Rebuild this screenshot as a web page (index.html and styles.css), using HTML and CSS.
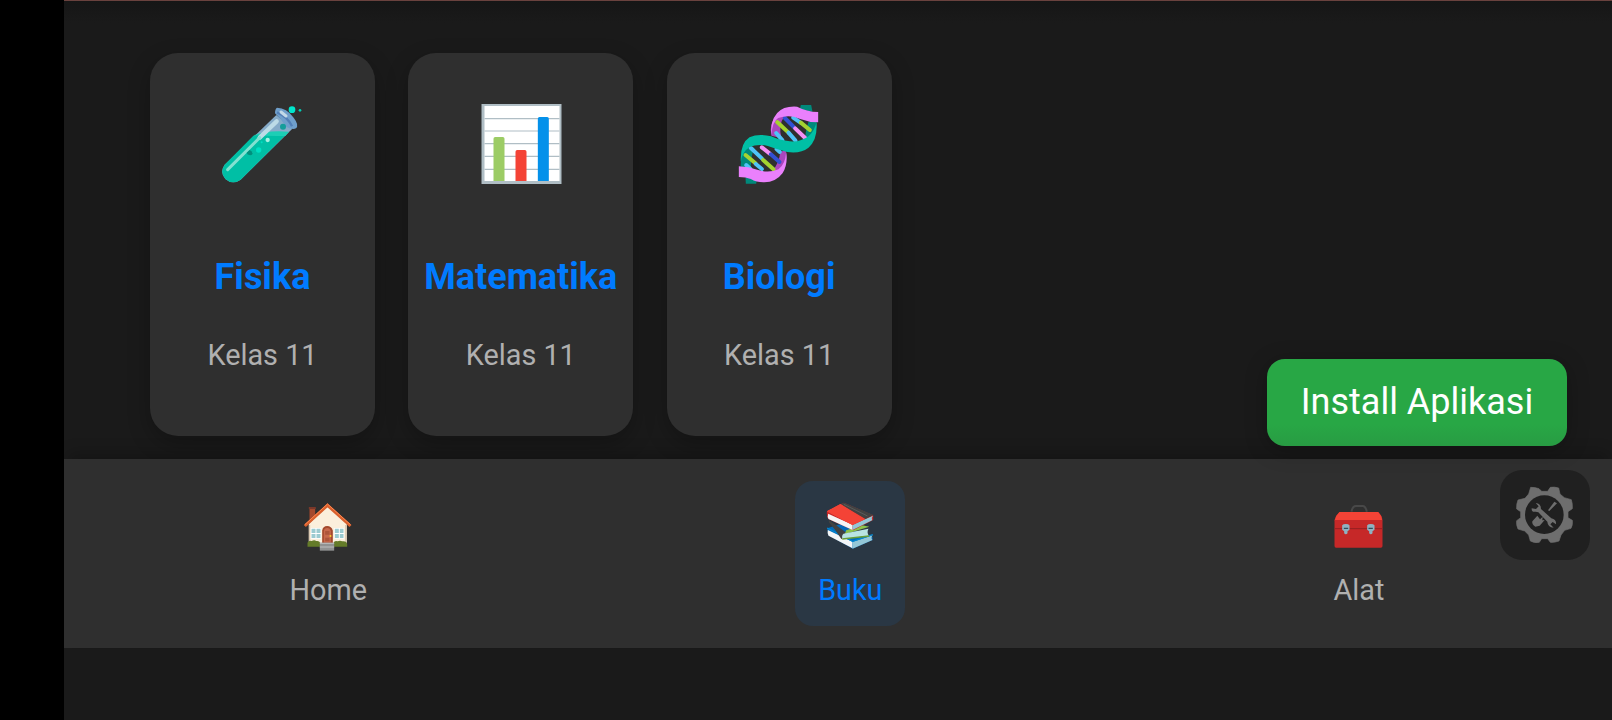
FILE: index.html
```html
<!DOCTYPE html>
<html lang="id">
<head>
<meta charset="utf-8">
<title>Buku</title>
<link rel="stylesheet" href="styles.css">
</head>
<body>
<div class="app">
  <main class="books">
    <article class="card">
      <svg class="card-icon" viewBox="-6 0 330 330">
        <path d="M199 75L247 116L92 269Q68 286 46 267Q28 246 44 224z" fill="#86abc9"/>
        <path d="M130 137Q166 126 229 133L92 269Q68 286 46 267Q28 246 44 224z" fill="#00bfa5"/>
        <path d="M132 136Q174 119 237 125L226 138Q176 139 132 136z" fill="#1cceb5"/>
        <path d="M201 53Q230 53 251 83Q268 105 258 115Q248 120 229 111Q212 85 195 70Q195 56 201 53z" fill="#6f9fcb"/>
        <path d="M201 67Q233 80 246 109" fill="none" stroke="#527fb7" stroke-width="7"/>
        <path d="M213 66L228 78" stroke="#c3d9e8" stroke-width="9" stroke-linecap="round"/>
        <path d="M200 94L149 143" stroke="#bddbe7" stroke-width="13" stroke-linecap="round"/>
        <path d="M149 143L53 239" stroke="#82e1d1" stroke-width="9" stroke-linecap="round"/>
        <circle cx="219" cy="110" r="9" fill="#159d9b"/>
        <circle cx="246" cy="59" r="10" fill="#00e5cb"/>
        <circle cx="270" cy="61" r="4" fill="#00cdb6"/>
        <circle cx="173" cy="150" r="6.500" fill="#a6f1e4"/>
        <circle cx="146" cy="180" r="8" fill="#00dfc3"/>
        <circle cx="155" cy="157" r="3" fill="#00dfc3"/>
        <path d="M110 188a10 10 0 0 0 18 3q-3-9-9-11z" fill="#008f7d"/>
      </svg>
      <h2 class="card-title">Fisika</h2>
      <p class="card-class">Kelas 11</p>
    </article>
    <article class="card">
      <svg class="card-icon" viewBox="1.500 0 330 330">
        <path d="M48 42H288V282H48z" fill="#b0bec5"/>
        <path d="M57 48H282V273H57z" fill="#fff"/>
        <path d="M57 86H282M57 123H282M57 161H282M57 199H282M57 238H282" stroke="#b0bec5" stroke-width="3.500"/>
        <path d="M84 273V146q0-5 5-5h23q5 0 5 5v127z" fill="#9ccc65"/>
        <path d="M150 273V185q0-5 5-5h23q5 0 5 5v88z" fill="#f44336"/>
        <path d="M217 273V86q0-5 5-5h23q5 0 5 5v187z" fill="#0491ea"/>
      </svg>
      <h2 class="card-title">Matematika</h2>
      <p class="card-class">Kelas 11</p>
    </article>
    <article class="card">
      <svg class="card-icon" viewBox="-1.500 0 330 330">
        <path d="M229 45H260L264 65 226 58zM252 95H276Q277 130 258 152L239 162 245 120zM63 262L97 268 95 281H64zM49 230Q47 188 72 166L90 174Q79 195 79 235z" fill="#00897b"/>
        <path d="M141 137Q133 100 154 80L181 77Q160 104 171 145zM167 185L184 181Q191 222 166 252L143 242Q165 220 167 185z" fill="#ab47bc"/>
        <g fill="none" stroke-width="12" stroke-linecap="round">
          <path d="M158 96L192 128" stroke="#a4d330"/><path d="M192 128L213 152" stroke="#4fc3f7"/>
          <path d="M181 84L209 112" stroke="#3251d4"/><path d="M212 115L242 144" stroke="#f48ff5"/>
          <path d="M206 83L228 98" stroke="#4fc3f7"/><path d="M229 98L256 120" stroke="#a4d330"/>
          <path d="M155 129L174 151M156 177L166 186" stroke="#4fc3f7"/>
          <path d="M63 195L93 220" stroke="#a4d330"/><path d="M94 222L112 237" stroke="#4fc3f7"/>
          <path d="M79 174L112 205" stroke="#4fc3f7"/><path d="M116 210L147 238" stroke="#a4d330"/>
          <path d="M112 172L135 190" stroke="#f48ff5"/><path d="M139 193L165 216" stroke="#3251d4"/>
          <path d="M65 225L78 237" stroke="#4fc3f7"/>
        </g>
        <path d="M141 138Q136 94 158 69Q178 47 218 50Q246 65 281 66V97Q253 97 225 86Q195 73 161 84Q142 95 141 138z" fill="#ea80fc"/>
        <path d="M43 229Q72 229 101 240Q133 250 162 238Q183 222 185 186Q191 223 174 250Q153 278 117 277Q95 277 79 267Q64 261 43 261z" fill="#ea80fc"/>
        <path d="M49 215Q46 161 75 142Q102 129 140 139Q164 151 196 154Q228 157 253 138Q270 123 276 97Q280 148 252 173Q228 192 188 186Q150 176 130 168Q99 161 76 171Q54 184 49 215z" fill="#00bfa5"/>
      </svg>
      <h2 class="card-title">Biologi</h2>
      <p class="card-class">Kelas 11</p>
    </article>
  </main>

  <nav class="nav">
    <a class="nav-item">
      <svg class="nav-icon" viewBox="43.500 36 144 144">
        <path d="M60 53H77V85L60 99z" fill="#a4492d"/><path d="M58 51H79V57H58z" fill="#79382a"/>
        <path d="M58 101L114 48 172 102V166H58z" fill="#fbefdc"/>
        <path d="M167 105H172V157H167zM58 105H62V155H58z" fill="#d9c8b2"/>
        <path d="M46 108L114 46 183 108" fill="none" stroke="#d9602d" stroke-width="9"/>
        <path d="M46 104L114 42 183 104" fill="none" stroke="#ff8750" stroke-width="3"/>
        <path d="M64 114H95V146H64zM134 114H164V146H134z" fill="#fff"/>
        <path d="M66 116H78V129H66zM81 116H93V129H81zM66 132H78V144H66zM81 132H93V144H81zM136 116H148V129H136zM151 116H162V129H151zM136 132H148V144H136zM151 132H162V144H151z" fill="#9ccbd0"/>
        <path d="M98 160V122q2-14 15-14t17 14v38z" fill="#a4492d"/>
        <path d="M103 158V124q1-10 10-10t11 10v34z" fill="#c7694d"/>
        <path d="M107 123H120V134H107zM107 143H120V154H107z" fill="#ad553b"/><circle cx="123" cy="138" r="3" fill="#ffd02c"/>
        <path d="M54 170V158q4-8 12-5q9-4 14 0q11-2 13 9v8zM132 170V159q3-8 12-5q8-4 14 0q14-2 15 9v7z" fill="#647b29"/>
        <path d="M91 158H134V182H91z" fill="#919292"/><path d="M91 160H134M91 171H134" stroke="#bdbdbd" stroke-width="3"/>
      </svg>
      <span>Home</span>
    </a>
    <a class="nav-item active">
      <svg class="nav-icon" viewBox="121.500 97 144 144">
        <path d="M125 176L166 163 261 202V211L202 237 129 197z" fill="#0469b7"/>
        <path d="M127 181L201 216V236L129 198Q125 189 127 181z" fill="#f4f6f7"/>
        <path d="M201 217L261 197Q255 207 261 211L201 237z" fill="#94c7d7"/>
        <path d="M125 175L201 215 262 195" fill="none" stroke="#0288d1" stroke-width="4"/>
        <path d="M130 151L180 187 249 168V173L177 195 168 209Q150 180 130 158z" fill="#424242"/>
        <path d="M182 182L231 167 251 171 178 194z" fill="#8bc34a"/>
        <path d="M174 192L249 177Q243 188 250 198L173 208Q166 200 174 192z" fill="#b9e4e2"/>
        <path d="M170 208L251 199" stroke="#689f38" stroke-width="4"/>
        <path d="M124 126L175 99 263 137V151L203 182 128 148Q123 139 124 126z" fill="#c62828"/>
        <path d="M128 132L201 165V181L129 148Q125 142 128 132z" fill="#f5f5f5"/>
        <path d="M201 166L262 138Q256 146 260 152L201 181z" fill="#94c7d7"/>
        <path d="M124 125L165 103 240 148 201 166z" fill="#f44336"/>
        <path d="M165 103L176 99 264 136 240 148z" fill="#424242"/>
        <path d="M124 125L165 103 233 150 201 166z" fill="#f44336"/>
        <path d="M175 104L246 139" stroke="#686868" stroke-width="2"/>
      </svg>
      <span>Buku</span>
    </a>
    <a class="nav-item">
      <svg class="nav-icon" viewBox="46.500 36 144 144">
        <path d="M96 65Q99 48 109 48H130Q138 48 142 65" fill="none" stroke="#484848" stroke-width="6"/>
        <path d="M60 66H176Q188 77 189 91V168Q189 173 184 173H50Q45 173 45 168V91Q49 75 60 66z" fill="#c62828"/>
        <path d="M60 66H176Q186 75 188 90H46Q50 75 60 66z" fill="#f44336"/>
        <path d="M45 116H189" stroke="#951f20" stroke-width="3"/>
        <path d="M68 106q3-4 11-4t11 4v13l-6 5v6q-5 6-10 0v-6l-6-5zM143 106q3-4 11-4t11 4v13l-6 5v6q-5 6-10 0v-6l-6-5z" fill="#8fb1c1"/>
        <path d="M73 115H86M147 115H160" stroke="#2f4e5e" stroke-width="4"/>
      </svg>
      <span>Alat</span>
    </a>
  </nav>

  <button class="install">Install Aplikasi</button>
  <button class="tools" aria-label="Pengaturan">
    <svg class="tools-icon" viewBox="30 30 270 270">
      <path d="M122 82Q135 82 147 86L155 94H173L181 82Q193 80 206 84L210 102 223 113 244 119Q248 131 247 146L234 155V173L247 181Q249 194 243 205L224 211 213 225 207 243Q194 248 181 247L173 236H155L148 247Q133 250 121 243L116 225 104 213 84 207Q78 194 80 182L92 173V155L80 147Q79 132 84 120L105 115 116 102z" fill="#6e6e6e" stroke="#6e6e6e" stroke-width="2" stroke-linejoin="round"/>
      <circle cx="163" cy="164" r="58" fill="#202020"/>
      <path d="M174 151L193 125 201 130 178 153z" fill="#6e6e6e"/>
      <path d="M142 167L127 184Q125 194 136 200L149 197 164 180 157 181 158 170 150 178z" fill="#6e6e6e"/>
      <path d="M125 145Q124 157 137 155L145 157 172 185Q173 201 191 203L181 193 188 186 198 193Q200 179 184 175L153 147Q153 130 137 129L146 139 138 147z" fill="#6e6e6e" stroke="#202020" stroke-width="2" paint-order="stroke"/>
    </svg>
  </button>
</div>
</body>
</html>
```
FILE: styles.css
```css
* { box-sizing: border-box; }

body {
  margin: 0;
  background: #000;
  font-family: Roboto, "Liberation Sans", sans-serif;
}

.app {
  position: relative;
  display: flex;
  flex-direction: column;
  height: 720px;
  margin-left: 64px;
  overflow: hidden;
  background: #1a1a1a;
  border-top: 1px solid #6a423e;
}

.app::before {
  content: "";
  height: 22px;
  margin-bottom: -22px;
  background: linear-gradient(#161616, #1a1a1a);
}

.books {
  display: flex;
  gap: 33.3px;
  height: 458px;
  padding: 52px 86px 23px;
}

.card {
  display: flex;
  flex-direction: column;
  align-items: center;
  width: 225px;
  height: 383px;
  padding-top: 37px;
  border-radius: 28px;
  background: #2f2f2f;
  box-shadow: 0 8px 22px rgba(0, 0, 0, .25);
}

.card-icon { width: 110px; height: 110px; }

.card-title {
  margin: 55px 0 0;
  color: #007bff;
  font-size: 36px;
  font-weight: 700;
  line-height: 44px;
}

.card-class {
  margin: 38px 0 0;
  color: #b0b0b0;
  font-size: 28.8px;
  line-height: 36px;
}

.nav {
  position: relative;
  display: flex;
  justify-content: space-around;
  align-items: center;
  height: 189px;
  padding-right: 2px;
  background: #2f2f2f;
  box-shadow: 0 -10px 14px -4px rgba(0, 0, 0, .22);
}

.nav-item {
  display: flex;
  flex-direction: column;
  align-items: center;
  height: 145px;
  padding: 21px 23px 0;
  border-radius: 18px;
  color: #b0b0b0;
  font-size: 28.8px;
  line-height: 36px;
}

.nav-item.active { background: #2a3744; color: #007bff; }

.nav-icon { width: 48px; height: 48px; margin-bottom: 22px; overflow: visible; }

.install {
  position: absolute;
  top: 358px;
  right: 45px;
  width: 300px;
  height: 87px;
  padding: 0 0 2px;
  border: 0;
  border-radius: 18px;
  background: linear-gradient(#28a745 75%, #289c43);
  box-shadow: 0 4px 22px rgba(0, 0, 0, .25);
  color: #fff;
  font-family: inherit;
  font-size: 36px;
}

.tools {
  position: absolute;
  top: 469px;
  right: 22px;
  width: 90px;
  height: 90px;
  padding: 0;
  border: 0;
  border-radius: 22px;
  background: #202020;
}

.tools-icon { display: block; width: 90px; height: 90px; }
```
